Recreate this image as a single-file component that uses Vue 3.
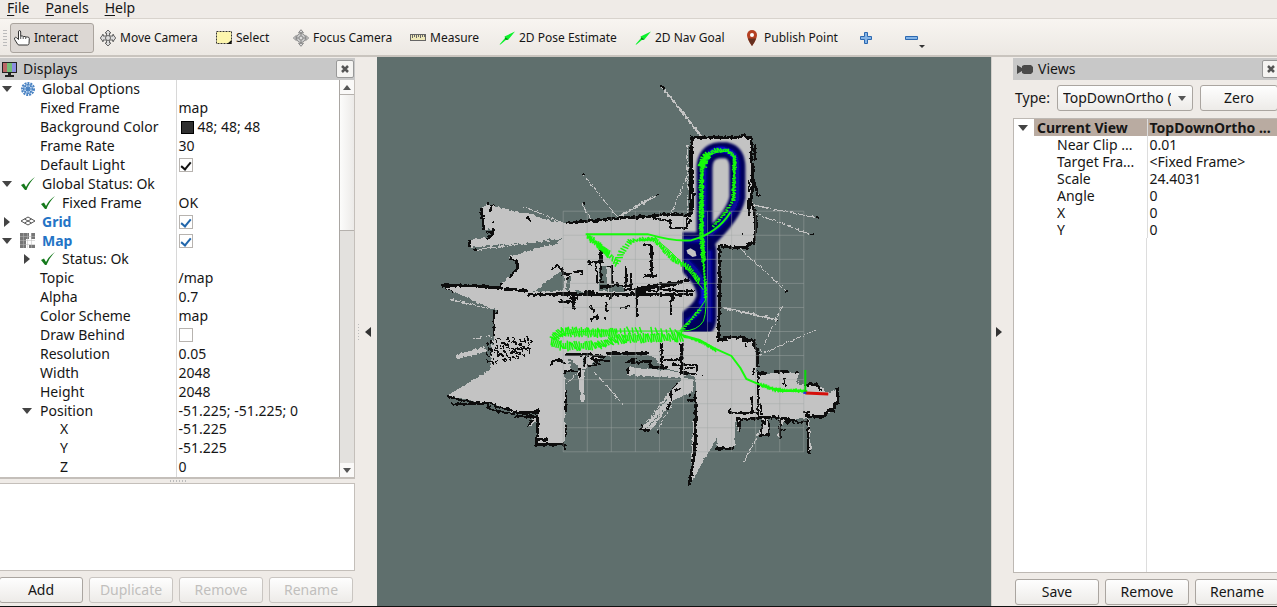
<script setup>
import { ref } from 'vue'

const tools = [
  { id: 'interact', label: 'Interact', active: true },
  { id: 'move', label: 'Move Camera' },
  { id: 'select', label: 'Select' },
  { id: 'focus', label: 'Focus Camera' },
  { id: 'measure', label: 'Measure' },
  { id: 'arrow', label: '2D Pose Estimate' },
  { id: 'arrow', label: '2D Nav Goal' },
  { id: 'pin', label: 'Publish Point' },
]

const displays = ref([
  { name: 'Global Options', level: 0, arrow: 'open', icon: 'gear' },
  { name: 'Fixed Frame', level: 1, value: 'map' },
  { name: 'Background Color', level: 1, value: '48; 48; 48', swatch: true },
  { name: 'Frame Rate', level: 1, value: '30' },
  { name: 'Default Light', level: 1, checked: true },
  { name: 'Global Status: Ok', level: 0, arrow: 'open', icon: 'ok' },
  { name: 'Fixed Frame', level: 1, icon: 'ok', value: 'OK' },
  { name: 'Grid', level: 0, arrow: 'closed', icon: 'grid', checked: true, display: true },
  { name: 'Map', level: 0, arrow: 'open', icon: 'map', checked: true, display: true },
  { name: 'Status: Ok', level: 1, arrow: 'closed', icon: 'ok' },
  { name: 'Topic', level: 1, value: '/map' },
  { name: 'Alpha', level: 1, value: '0.7' },
  { name: 'Color Scheme', level: 1, value: 'map' },
  { name: 'Draw Behind', level: 1, checked: false },
  { name: 'Resolution', level: 1, value: '0.05' },
  { name: 'Width', level: 1, value: '2048' },
  { name: 'Height', level: 1, value: '2048' },
  { name: 'Position', level: 1, arrow: 'open', value: '-51.225; -51.225; 0' },
  { name: 'X', level: 2, value: '-51.225' },
  { name: 'Y', level: 2, value: '-51.225' },
  { name: 'Z', level: 2, value: '0' },
])

const viewProps = [
  { name: 'Near Clip ...', value: '0.01' },
  { name: 'Target Fra...', value: '<Fixed Frame>' },
  { name: 'Scale', value: '24.4031' },
  { name: 'Angle', value: '0' },
  { name: 'X', value: '0' },
  { name: 'Y', value: '0' },
]

let seed = 7
function rand() {
  seed = (seed * 16807) % 2147483647
  return seed / 2147483647
}

// Short strokes laid across a polyline, one for each pose of the trajectory.
function poses(points, width, step) {
  let d = ''
  for (let i = 1; i < points.length; i++) {
    const [x0, y0] = points[i - 1]
    const [x1, y1] = points[i]
    const len = Math.hypot(x1 - x0, y1 - y0)
    const ux = (x1 - x0) / len
    const uy = (y1 - y0) / len
    for (let t = 0; t < len; t += step) {
      const w = (width / 2) * (0.6 + rand() * 0.6)
      const skew = rand() * 2
      const x = x0 + ux * t
      const y = y0 + uy * t
      d += `M${(x - uy * w + ux * skew).toFixed(1)} ${(y + ux * w + uy * skew).toFixed(1)}`
      d += `L${(x + uy * w - ux * skew).toFixed(1)} ${(y - ux * w - uy * skew).toFixed(1)}`
    }
  }
  return d
}

const trails = [
  poses([[553, 338], [562, 332], [580, 332], [600, 333], [617, 333]], 9, 2),
  poses([[552, 341], [562, 346], [580, 346], [600, 345], [612, 341], [626, 338], [650, 338], [682, 337]], 9, 2),
  poses([[617, 331], [642, 330]], 8, 4),
  poses([[652, 331], [682, 332]], 7, 5),
  poses([[588, 236], [600, 246], [609, 254]], 6, 1.5),
  poses([[609, 254], [617, 263], [622, 252], [630, 242]], 6, 3),
  poses([[630, 241], [644, 239], [655, 239]], 4, 2),
  poses([[655, 239], [664, 249], [674, 259], [690, 268], [700, 282]], 5, 2),
  poses([[703, 160], [702, 180], [702, 230], [704, 262]], 5, 1.8),
  poses([[704, 262], [706, 285], [706, 300]], 3, 3),
  poses([[703, 166], [705, 158], [709, 154]], 8, 1.2),
  poses([[709, 154], [716, 150], [729, 150]], 4, 2),
  poses([[729, 151], [735, 156], [735, 170], [734, 200]], 4, 2),
  poses([[734, 200], [724, 215], [712, 228]], 3, 3),
  poses([[680, 333], [688, 324], [700, 310]], 3, 3),
  poses([[684, 336], [702, 342], [716, 350]], 3, 2),
  poses([[762, 385], [776, 390], [806, 391]], 4, 2),
]

// Wall outlines as [stroke width, path].
const walls = [
  [3, 'M483 208L481 212L484 220V230M491 207V211M494 228L492 235L487 238M470 240V247'],
  [2, 'M491 206L494 204M493 221V223M486 232H491M474 250H477M528 217L531 222M487 204H489'],
  [3, 'M566 223L586 221L616 218L654 216L665 214H679L692 216'],
  [2, 'M654 218L670 221M670 219V228H688V218M691 213V147M691 220L688 226'],
  [3, 'M692 215L694 195L692 185V137H738L744 135L752 138V165'],
  [3, 'M753 164V192L751 202L755 210L757 225L755 242L748 244V247L733 248L719 245'],
  [2, 'M750 180V192M750 197V215M756 145V160M755 180L758 195L761 196M744 233V235'],
  [3, 'M720 246V298L719 340H726V338H744V341H755V347L758 350V368'],
  [2, 'M747 344V348M759 370V419H738M753 396V414M729 413H759M731 408V414M762 404V415'],
  [3, 'M760 374H768M775 372H790M796 373H800M806 385H817L822 390'],
  [3, 'M838 388V397L839 404H835V408L828 411L825 417H812L806 415M759 418H780L786 419L795 422'],
  [2, 'M785 378L784 384L787 386M755 368L754 374M804 412H811M832 411H836'],
  [3, 'M510 258L517 261L518 268L514 273L510 276M502 286V283'],
  [3, 'M441 285H467L502 288M505 289L519 290L528 291M528 294H567'],
  [2, 'M494 310V337M497 310V314M445 288L453 292M552 270L557 265L562 269L564 275'],
  [3, 'M557 293H577M559 301H572M574 296V309M585 291H595M624 289H650M600 286H614'],
  [2, 'M563 274H570L567 280M573 272L582 271V275M600 250L602 283M596 262L598 283M588 262H603M590 262V266M602 247V262M608 266L612 267V283L618 284V286H631V273M626 265V285'],
  [3, 'M652 245V276M565 294H694M640 288L660 287L676 284L686 280'],
  [2, 'M643 245H652M644 276H657M630 290L660 284L675 283L690 279V268M694 291L662 290L630 293M637 293V317M671 295V315M673 294V302M666 295H682'],
  [2, 'M590 306L594 310V314M606 302V310L609 312M591 320L597 316V320M605 317V320M619 308H625L631 305M615 294L609 299M569 298H578M576 297L575 303'],
  [3, 'M565 355H592L606 357M606 354H649M628 361L640 364M640 362H651V367L668 368'],
  [2, 'M550 366Q558 354 566 365M565 371H578M580 368V378M585 356V366M594 360L600 365M626 363L636 358M628 367V374M588 366L601 364M590 359L610 361'],
  [3, 'M662 343V367M682 343V373H690M672 365H676'],
  [2, 'M664 360H680M676 365H698M698 365V372M686 368H696M682 374H698M703 375H705'],
  [2, 'M447 396L463 401L494 404L496 407L512 410M451 404H487L490 409L500 412L513 414'],
  [3, 'M513 413H538V409M515 417H537M538 417L537 445H565M538 440H549'],
  [2, 'M565 371V374M566 390V412M566 424V436M565 444V450M529 426L532 420'],
  [3, 'M696 391V440L694 460L690 485M688 401H695M716 449H735'],
  [2, 'M691 394V397M678 383L672 389L671 402L668 410M675 391L681 388M640 430L644 424M640 430H650M657 432H659'],
  [2, 'M737 419L740 427M741 421V432M764 420L761 435H770V420M781 420V438M784 419L788 424L793 419L800 423L806 422M808 420L809 452H812M783 430H787'],
  [2, 'M661 85L665 88M583 174H585M656 195H659M817 218H821M811 235H814M786 292H789M777 321H780M583 203H585M766 419V425'],
]

const clutter = Array.from({ length: 115 }, () => {
  const t = rand()
  return `M${Math.round(486 + t * 43)} ${Math.round(338 + rand() * (29 - t * 14))}h${rand() > 0.6 ? 3 : 1}v${rand() > 0.5 ? 2 : 1}`
}).join('')

const gridLines = Array.from({ length: 11 }, (_, i) => i * 24.1)
</script>

<template>
  <div class="window">
    <nav class="menubar">
      <button><u>F</u>ile</button>
      <button><u>P</u>anels</button>
      <button><u>H</u>elp</button>
    </nav>

    <div class="toolbar" role="toolbar">
      <span class="grip"></span>
      <button v-for="tool in tools" :key="tool.label" class="tool" :class="{ active: tool.active }">
        <svg width="16" height="18" viewBox="0 0 16 18">
          <g v-if="tool.id === 'interact'">
            <path d="M4.500 10V3q0-1.500 1-1.500t1.200 1.500v4h1.800q.5 0 .8.500h1.700q.6 0 .9.500h1.600q1.800 0 1.800 1.600l-.3 4.900q-.2 1.500-1.500 1.500H5q-1 0-1.500-1L.7 10.500q-.6-2 .8-2.200 1 0 3 2.200z" fill="#fff" stroke="#333" />
            <path d="M6.700 6.500v3.500M9.200 7.500v2.500M11.700 8v2" stroke="#555" fill="none" />
          </g>
          <g v-else-if="tool.id === 'move'" fill="#ddd" stroke="#666" stroke-linejoin="round">
            <path d="M8 1l3 3H9.500v3H13V5.500L15.700 9 13 12.500V11H9.500v3H11l-3 3-3-3h1.500v-3H3v1.500L.3 9 3 5.500V7h3.500V4H5z" />
            <circle cx="8" cy="9" r="2.500" /><path d="M2 5.500l2 1M14 5.500l-2 1M2 12.500l2-1M14 12.500l-2-1" />
          </g>
          <g v-else-if="tool.id === 'select'">
            <rect x=".5" y="2.500" width="15" height="12" fill="#fdf6ae" stroke="#333" stroke-dasharray="2 1" />
            <path d="M15.500 11v4H11z" fill="#111" />
          </g>
          <g v-else-if="tool.id === 'focus'" fill="#ddd" stroke="#8a8a8a">
            <path d="M8 .7l2.500 3H5.500zM8 17.300l2.500-3H5.500zM.3 9l3-2.500v5zM15.700 9l-3-2.500v5z" />
            <circle cx="8" cy="9" r="4.500" fill="#ccc" /><circle cx="8" cy="9" r="2" />
            <path d="M8 3v4M8 11v4M2 9h4M10 9h4" fill="none" />
          </g>
          <g v-else-if="tool.id === 'measure'">
            <rect x=".5" y="5.500" width="15" height="6" fill="#eee8b8" stroke="#666" />
            <path d="M2.500 6v3M4.500 6v2M6.500 6v3M8.500 6v2M10.500 6v3M12.500 6v2M14.500 6v2" stroke="#666" />
          </g>
          <g v-else-if="tool.id === 'arrow'">
            <path d="M.5 15.500L6 9l-.5-1.500L16 2.500 9 11l-1.500-.5-6 5z" fill="#0cf22c" />
            <path d="M6 8.500l3 1.500-1 1-2-.8z" fill="#0a7c18" />
          </g>
          <g v-else>
            <path d="M8 17Q3 10 3 6a5 5 0 0 1 10 0q0 4-5 11z" fill="#b54023" />
            <path d="M8 17q-3-4-4-7.500h8Q11 13 8 17z" fill="#653020" />
            <circle cx="8" cy="6" r="2" fill="#fff" />
          </g>
        </svg>
        <span>{{ tool.label }}</span>
      </button>
      <button class="tool" aria-label="Add tool">
        <svg width="16" height="16" viewBox="0 0 16 16"><path d="M6.500 2.500h3v4h4v3h-4v4h-3v-4h-4v-3h4z" fill="#85b4e6" stroke="#2c68b0" /></svg>
      </button>
      <button class="tool" aria-label="Remove tool">
        <svg width="22" height="22" viewBox="0 0 22 22"><path d="M1.500 9.500h12v3h-12z" fill="#85b4e6" stroke="#2c68b0" /><path d="M15 18h6l-3 3z" fill="#333" /></svg>
      </button>
    </div>

    <main class="work">
      <section class="displays">
        <header class="title">
          <svg width="17" height="17" viewBox="0 0 17 17">
            <rect x="1" y="1" width="15" height="11" fill="#222" />
            <path d="M2 2h4v9H2z" fill="#b96767" /><path d="M6 2h5v9H6z" fill="#73bd76" /><path d="M11 2h4v9h-4z" fill="#8c8de0" />
            <path d="M7 12h3v2h3v2H4v-2h3z" fill="#222" />
          </svg>
          <h2>Displays</h2>
          <button class="close" aria-label="Close Displays"><svg width="8" height="8" viewBox="0 0 8 8"><path d="M1 1l6 6M7 1L1 7" stroke="#555" stroke-width="2.500" /></svg></button>
        </header>
        <div class="tree">
          <table class="props">
            <tbody>
              <tr v-for="(row, i) in displays" :key="i">
                <th scope="row">
                  <div class="name" :class="['level' + row.level, { display: row.display }]">
                    <span class="twist">
                      <svg v-if="row.arrow === 'open'" width="10" height="10" viewBox="0 0 10 10"><path d="M0 2h10L5 8z" fill="#444" /></svg>
                      <svg v-else-if="row.arrow" width="10" height="10" viewBox="0 0 10 10"><path d="M2 0v10l6-5z" fill="#444" /></svg>
                    </span>
                    <svg v-if="row.icon" class="icon" width="16" height="16" viewBox="0 0 16 16">
                      <g v-if="row.icon === 'gear'" fill="none" stroke="#4a83c3">
                        <circle cx="8" cy="8" r="6" stroke-width="2" stroke-dasharray="2 1" />
                        <circle cx="8" cy="8" r="4.500" fill="#b5d0ee" /><circle cx="8" cy="8" r="1.500" /><path d="M8 3v10M3 8h10M4.500 4.500l7 7M11.500 4.500l-7 7" />
                      </g>
                      <path v-else-if="row.icon === 'ok'" d="M1 9l3-1.500 2 3.500Q9 5 15 1 9 7 6.500 14H5z" fill="#157a1c" />
                      <g v-else-if="row.icon === 'grid'" fill="none" stroke="#555"><path d="M1 7l7-4 7 4-7 4zM4.500 5l7 4M11.500 5l-7 4" /></g>
                      <g v-else>
                        <path d="M0 0h9v6H6v9H0zM11 0h4v6h-4zM9 12h6v3H9z" fill="#777" />
                        <path d="M0 3.500h15M0 7.500h15M0 11.500h15M3.500 0v15M7.500 0v15M11.500 0v15" stroke="#bbb" stroke-width=".5" />
                      </g>
                    </svg>
                    <span>{{ row.name }}</span>
                  </div>
                </th>
                <td>
                  <div class="value">
                    <span v-if="row.swatch" class="swatch"></span>
                    <input v-if="row.checked !== undefined" v-model="row.checked" type="checkbox" :class="{ display: row.display }" :aria-label="row.name">
                    <span>{{ row.value }}</span>
                  </div>
                </td>
              </tr>
            </tbody>
          </table>
          <div class="scrollbar">
            <button aria-label="Scroll up"><svg width="8" height="5" viewBox="0 0 8 5"><path d="M0 5h8L4 0z" fill="#555" /></svg></button>
            <div class="track"><div class="thumb"></div></div>
            <button aria-label="Scroll down"><svg width="8" height="5" viewBox="0 0 8 5"><path d="M0 0h8L4 5z" fill="#555" /></svg></button>
          </div>
        </div>
        <div class="hsplit"><span></span></div>
        <div class="help"></div>
        <div class="actions">
          <button class="push">Add</button>
          <button class="push" disabled>Duplicate</button>
          <button class="push" disabled>Remove</button>
          <button class="push" disabled>Rename</button>
        </div>
      </section>

      <div class="vsplit left">
        <span class="dots"></span>
        <svg width="6" height="10" viewBox="0 0 6 10"><path d="M6 0v10L0 5z" fill="#333" /></svg>
      </div>

      <div class="scene">
        <svg viewBox="377 57 615 549" aria-label="Map view">
          <defs>
            <filter id="soft" x="-20%" y="-20%" width="140%" height="140%"><feGaussianBlur stdDeviation="1.200" /></filter>
            <filter id="rough" x="-5%" y="-5%" width="110%" height="110%">
              <feTurbulence type="fractalNoise" baseFrequency=".3" numOctaves="2" seed="4" />
              <feDisplacementMap in="SourceGraphic" scale="4" xChannelSelector="R" yChannelSelector="G" />
            </filter>
            <clipPath id="local"><path d="M683 135h70v197h-70z" /></clipPath>
          </defs>
          <g shape-rendering="crispEdges" filter="url(#rough)">
            <g fill="#c3c3c3">
              <path d="M482 208L487 204L494 206L530 214L548 220L566 223L620 218L660 216L692 215V137H753V200L756 243L748 246L733 248L720 245V339H757V376L775 373H800L797 379L800 385L822 386L828 393L838 389V402L832 412L825 416L806 418L795 420L759 419L742 420L736 422L735 449H718L717 439L690 485L696 391L697 377L662 367L655 357L640 354L603 356L588 367L580 371L578 366L568 357L571 371H565V446H538V413L512 412L494 404L447 396L490 370L492 350L494 336L496 310L470 299L441 285L503 286L502 283L513 274L518 268L515 260L508 257L548 245L563 239L475 247H470V240L490 236L494 232L492 229L485 230Z" />
              <path d="M578 370h6v32h-3zM628 367L662 370L697 375V379L640 376L628 375zM697 367L675 385L670 392L641 429L652 430L664 413L675 400L694 391V380zM737 420h5v9l-3 3zM763 419h6v17h-7zM780 419h6l-4 7-1 10h-2zM807 419h3l2 33h-3zM529 427l5-11 3 2-5 9zM456 355L484 347L488 351L458 359z" />
            </g>
            <g fill="#5f6f6d">
              <path d="M534 292L562 270L565 280L563 290zM568 276L572 277L569 291L566 290zM600 266H607L608 291H599zM609 285H622L626 292H609zM575 290L584 291L585 296H576zM548 239L556 240L557 244L550 245zM603 357L640 355L630 359L600 365zM584 357H587L586 366H583zM640 356L655 361V366L628 364z" />
            </g>
            <g fill="none" stroke="#c3c3c3">
              <path stroke-width="2" d="M661 85L702 136M620 216L657 195M722 307L778 320" />
              <path d="M583 174L618 217M582 203L591 219M523 206L566 224M474 250L550 240M688 145V215M687 178L670 217M755 205L819 218M757 214L813 235M740 248L787 291M783 306L760 355L816 330M593 370L623 404M765 422L745 462M450 299L489 309M473 339L492 336M566 384L576 374M657 431L672 405M757 193L761 196" />
            </g>
            <path d="M643 427L668 398M648 428L664 410" stroke="#5f6f6d" />
            <g fill="none" stroke="#080b0b">
              <path v-for="(wall, i) in walls" :key="i" :stroke-width="wall[0]" :d="wall[1]" />
              <path :d="clutter" />
            </g>
          </g>

          <g clip-path="url(#local)">
            <g fill="none" filter="url(#soft)">
              <path d="M705 240V169q0-18 15-19h7q11 2 11 17v30q-3 18-33 46" stroke="#05055c" stroke-width="16" />
              <path d="M676 232H714L717 250V318Q716 334 706 334H676V316Q694 306 697 296Q698 284 676 266z" fill="#05055c" />
              <path d="M705 250V169q0-18 15-19h7q11 2 11 17v30q-3 16-28 38M710 250V322M686 322q20-10 20-30-4-20-20-32M684 240h20" stroke="#0707a0" stroke-width="5" />
              <path d="M710 153q14-10 25 4M703 288q3 8-2 16" stroke="#0d0dea" stroke-width="4" />
            </g>
            <path d="M687 250l4-2 5 3 1 5-4 1-5-4z" fill="#c3c3c3" />
          </g>

          <g stroke="#a0a7a6" stroke-opacity=".45">
            <path v-for="g in gridLines" :key="g" :d="`M${563.5 + g} 211v241M563.5 ${211 + g}h241`" />
          </g>

          <g fill="none" stroke="#16fb0a">
            <path d="M586 234H648Q676 242 692 240Q718 233 731 212M655 239L640 240M682 335L700 340L714 348L732 356L741 368L747 379L761 385L781 391H808" stroke-width="2" />
            <path d="M703 240L706 300Q697 315 683 327M683 331Q698 331 704 321Q708 310 706 284M660 242Q680 257 704 290M706 260L703 240V165Q705 151 728 151Q735 152 735 165L734 198" stroke-width="1" />
            <path d="M553 340Q562 332 590 331H681" stroke-width="1" />
            <path v-for="(trail, i) in trails" :key="i" :d="trail" stroke-width="1.500" />
            <path d="M806 370V392" stroke="#0bd60b" stroke-width="2" />
            <path d="M806 393L829 394" stroke="#d5100b" stroke-width="3" />
            <path d="M804 393H807" stroke="#1b38d8" stroke-width="2" />
          </g>
        </svg>
      </div>

      <div class="vsplit right">
        <svg width="6" height="10" viewBox="0 0 6 10"><path d="M0 0v10l6-5z" fill="#333" /></svg>
      </div>

      <section class="views">
        <header class="title">
          <svg width="17" height="17" viewBox="0 0 17 17"><path d="M1 4l5 3h0V5l2-1h7l2 2v5l-2 2H8l-2-1v-2l-5 3z" fill="#4a4a4a" /></svg>
          <h2>Views</h2>
          <button class="close" aria-label="Close Views"><svg width="8" height="8" viewBox="0 0 8 8"><path d="M1 1l6 6M7 1L1 7" stroke="#555" stroke-width="2.500" /></svg></button>
        </header>
        <div class="type">
          <label for="view-type">Type:</label>
          <div class="combo">
            <select id="view-type"><option>TopDownOrtho (rviz)</option></select>
            <svg width="8" height="5" viewBox="0 0 8 5"><path d="M0 0h8L4 5z" fill="#555" /></svg>
          </div>
          <button class="push">Zero</button>
        </div>
        <div class="viewtree">
          <table>
            <tbody>
              <tr class="current">
                <th scope="row"><svg width="10" height="10" viewBox="0 0 10 10"><path d="M0 2h10L5 8z" fill="#444" /></svg><span>Current View</span></th>
                <td>TopDownOrtho ...</td>
              </tr>
              <tr v-for="p in viewProps" :key="p.name">
                <th scope="row">{{ p.name }}</th>
                <td>{{ p.value }}</td>
              </tr>
            </tbody>
          </table>
          <div class="blank"></div>
        </div>
        <div class="actions">
          <button class="push">Save</button>
          <button class="push">Remove</button>
          <button class="push">Rename</button>
        </div>
      </section>
    </main>
  </div>
</template>

<style>
body { margin: 0; }
</style>

<style scoped>
* { box-sizing: border-box; }
.window {
  display: flex;
  flex-direction: column;
  height: 100vh;
  overflow: hidden;
  background: #efebe7;
  border-bottom: 1px solid #111;
  color: #161616;
  font: 14px/18px "Noto Sans", "Open Sans", sans-serif;
}
button { font: inherit; color: inherit; }
.menubar { display: flex; align-items: flex-start; gap: 16px; padding: 0 7px; height: 19px; flex: none; border-bottom: 1px solid #d8d3cd; }
.menubar button { border: 0; padding: 0; background: none; line-height: 16px; }
.menubar u { text-underline-offset: 2px; }
.toolbar {
  display: grid;
  grid-template-columns: 7px 86px 116px 77px 117px 89px 136px 109px 114px 46px 30px;
  align-items: center;
  flex: none;
  height: 38px;
  padding: 2px 0 0 3px;
  background: linear-gradient(#f8f5f1, #ece8e3);
  border-bottom: 2px solid #c9c4be;
  font-size: 12px;
}
.grip { width: 4px; height: 18px; background: radial-gradient(circle, #bbb 1px, transparent 1px) 0 0 / 2px 3px; }
.tool {
  display: flex;
  align-items: center;
  justify-self: start;
  gap: 4px;
  height: 30px;
  padding: 0 3px;
  border: 1px solid transparent;
  border-radius: 3px;
  background: none;
  white-space: nowrap;
}
.tool svg { flex: none; }
.tool.active { width: 84px; background: #dcd7d3; border-color: #aaa49e; }
.work { display: flex; flex: 1; min-height: 0; }
.title { display: flex; align-items: center; flex: none; height: 22px; gap: 5px; background: #c8c8c8; padding: 0 1px; }
.title h2 { flex: 1; margin: 0; font-size: 14px; font-weight: 400; }
.close {
  display: grid;
  place-items: center;
  width: 18px;
  height: 18px;
  padding: 0;
  border: 1px solid #999;
  border-radius: 2px;
  background: #f5f4f2;
}
.displays { display: flex; flex-direction: column; flex: none; width: 355px; padding-top: 1px; }
.tree { display: flex; flex: 1; min-height: 0; background: #fff; border: solid #c4bfba; border-width: 0 1px 2px 0; }
.props { flex: 1; width: 0; height: 100%; border-collapse: collapse; table-layout: fixed; }
.props th { width: 176px; padding: 0; font-weight: 400; text-align: left; border-right: 1px solid #d8d8d8; }
.props td { padding: 0 0 0 2px; }
.name, .value { display: flex; align-items: center; height: 18px; white-space: nowrap; }
.name.display { color: #2374c6; font-weight: 700; }
.name { padding-left: 2px; }
.level1 { padding-left: 22px; }
.level2 { padding-left: 42px; }
.twist { display: flex; width: 18px; }
.icon { flex: none; margin-right: 6px; }
.value { gap: 4px; }
.swatch { width: 13px; height: 13px; margin-left: 2px; background: #303030; border: 1px solid #000; }
input[type="checkbox"] {
  display: grid;
  place-items: center;
  appearance: none;
  width: 14px;
  height: 14px;
  margin: 0;
  border: 1px solid #b7b3af;
  background: #fff;
  color: #111;
}
input[type="checkbox"]:checked::before {
  content: "";
  width: 4px;
  height: 8px;
  border: solid currentColor;
  border-width: 0 2px 2px 0;
  transform: rotate(40deg);
}
input.display { color: #2166ab; }
.scrollbar { display: flex; flex-direction: column; width: 15px; border-left: 1px solid #aaa6a2; background: #e3e1de; }
.scrollbar button { display: grid; place-items: center; height: 14px; padding: 0; border: 0; background: #faf9f8; }
.track { flex: 1; }
.thumb { height: 37%; background: linear-gradient(90deg, #fcfcfb, #eceae8); border: solid #b5b1ad; border-width: 1px 0; }
.hsplit { display: grid; place-items: center; height: 4px; }
.hsplit span { width: 16px; height: 2px; background: repeating-linear-gradient(90deg, #bbb 0 1px, transparent 1px 3px); }
.help { height: 88px; flex: none; background: #fff; border: solid #c4bfba; border-width: 1px 1px 1px 0; }
.actions { display: flex; gap: 6px; flex: none; }
.displays .actions { padding: 6px 2px 3px 0; margin-left: -1px; }
.push {
  flex: 1;
  height: 26px;
  padding: 0;
  border: 1px solid #aaa5a0;
  border-radius: 3px;
  background: linear-gradient(#fefefe, #edebe8);
}
.push:disabled { color: #c1bfbd; border-color: #c9c5c1; }
.vsplit { display: flex; align-items: center; flex: none; width: 22px; }
.vsplit.left { justify-content: flex-end; gap: 6px; padding-right: 6px; }
.vsplit.right { padding-left: 4px; border-left: 1px solid #d4d0cc; }
.dots { width: 1px; height: 16px; background: repeating-linear-gradient(#bbb 0 1px, transparent 1px 3px); }
.scene { flex: 1; min-width: 0; background: #5f6f6d; }
.scene svg { display: block; width: 100%; height: 100%; }
.views { display: flex; flex-direction: column; flex: none; width: 268px; margin-right: -4px; padding-top: 1px; }
.views .title { padding-left: 3px; }
.type { display: flex; align-items: center; gap: 7px; height: 38px; padding: 0 3px 3px 2px; }
.combo { position: relative; width: 136px; }
.combo select {
  appearance: none;
  display: block;
  width: 100%;
  height: 26px;
  padding: 0 21px 0 5px;
  border: 1px solid #aaa5a0;
  border-radius: 3px;
  background: linear-gradient(#fefefe, #edebe8);
  color: inherit;
  font: inherit;
}
.combo svg { position: absolute; right: 7px; top: 11px; }
.viewtree { display: flex; flex-direction: column; flex: 1; background: #fff; border: 1px solid #bdb8b3; }
.viewtree table { width: 100%; border-collapse: collapse; table-layout: fixed; }
.viewtree th, .viewtree td {
  height: 17px;
  padding: 0 3px;
  font-weight: 400;
  line-height: 17px;
  text-align: left;
  white-space: nowrap;
}
.viewtree th { width: 133px; padding-left: 43px; padding-right: 0; border-right: 1px solid #ddd; }
.viewtree td { padding: 0 0 0 2px; }
.viewtree .current th { padding: 0 0 0 4px; background: linear-gradient(90deg, #fff 20px, #b9aba1 20px); }
.viewtree .current th svg { margin-right: 9px; }
.viewtree .current td { background: #b9aba1; }
.viewtree .current th, .viewtree .current td { font-weight: 700; }
.blank { flex: 1; width: 133px; border-right: 1px solid #ddd; }
.views .actions { padding: 6px 2px 1px 2px; }
</style>
